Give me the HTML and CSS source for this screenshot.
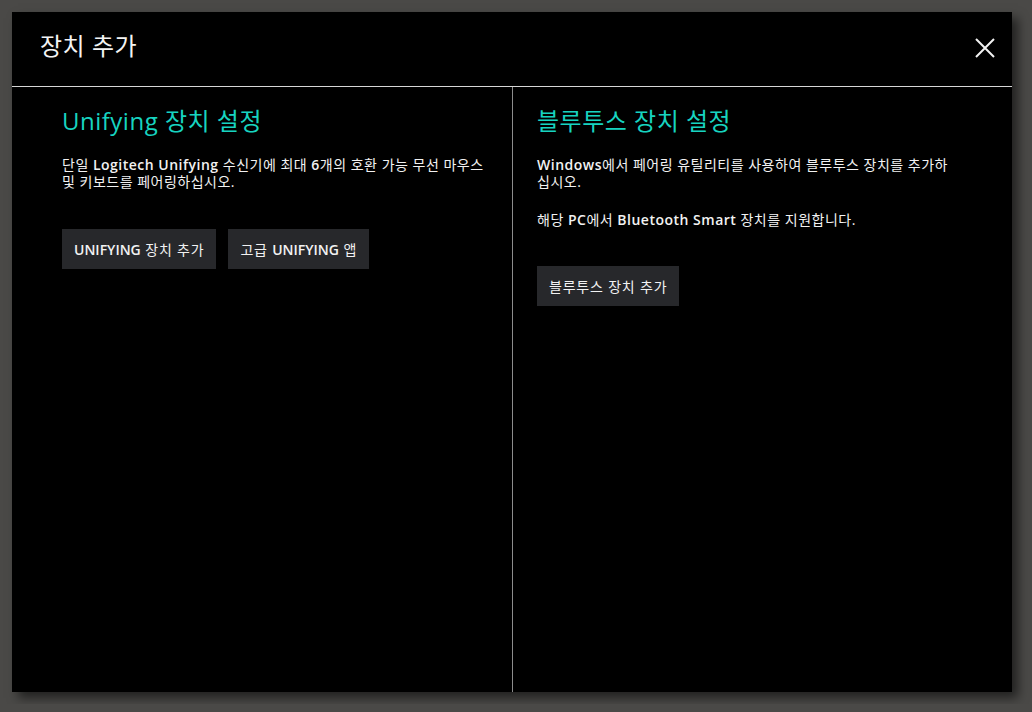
FILE: index.html
```html
<!DOCTYPE html>
<html lang="ko">
  <head>
    <title>장치 추가</title>
    <meta charset="utf-8">
    <link rel="stylesheet" href="styles.css">
  </head>
  <body>
    <div class="dialog">
      <div class="dialog-header">
        <h1>장치 추가</h1>
        <button class="close" aria-label="닫기">
          <svg width="20" height="20" viewBox="0 0 20 20">
            <path d="M1 1 L19 19 M19 1 L1 19" stroke="#f2f2f2" stroke-width="2" fill="none"/>
          </svg>
        </button>
      </div>

      <div class="dialog-body">
        <div class="column unifying">
          <h2>Unifying 장치 설정</h2>
          <p>단일 <span class="en">Logitech Unifying</span> 수신기에 최대 <span class="en">6</span>개의 호환 가능 무선 마우스 및 키보드를 페어링하십시오.</p>
          <div class="actions">
            <button class="btn"><span class="en">UNIFYING</span> 장치 추가</button>
            <button class="btn">고급 <span class="en">UNIFYING</span> 앱</button>
          </div>
        </div>

        <div class="column bluetooth">
          <h2>블루투스 장치 설정</h2>
          <p><span class="en">Windows</span>에서 페어링 유틸리티를 사용하여 블루투스 장치를 추가하십시오.</p>
          <p>해당 <span class="en">PC</span>에서 <span class="en">Bluetooth Smart</span> 장치를 지원합니다.</p>
          <div class="actions">
            <button class="btn">블루투스 장치 추가</button>
          </div>
        </div>
      </div>
    </div>
  </body>
</html>
```

FILE: styles.css
```css
body {
    margin: 0;
    padding: 12px;
    background-color: #4a4947;
    font-family: "Open Sans", "Noto Sans CJK KR", sans-serif;
    color: #f2f2f2;
}

.dialog {
    width: 1000px;
    height: 680px;
    background-color: #000;
    box-shadow: 6px 6px 10px rgba(0, 0, 0, 0.55);
    display: flex;
    flex-direction: column;
}

.dialog-header {
    height: 74px;
    border-bottom: 1px solid #d6d6d6;
    display: flex;
    align-items: center;
    justify-content: space-between;
    padding: 0 17px 0 28px;
    box-sizing: content-box;
}

.dialog-header h1 {
    margin: 0 0 10px 0;
    font-size: 24px;
    font-weight: 400;
    letter-spacing: 0.5px;
    color: #f4f4f4;
}

.close {
    background: none;
    border: none;
    padding: 0;
    width: 20px;
    height: 20px;
    margin-bottom: 2px;
    cursor: pointer;
}

.dialog-body {
    flex: 1;
    display: flex;
}

.column {
    padding-top: 19px;
    box-sizing: border-box;
}

.unifying {
    width: 501px;
    padding-left: 50px;
    border-right: 1px solid #8c8c8c;
}

.bluetooth {
    flex: 1;
    padding-left: 24px;
}

h2 {
    margin: 0 0 20px 0;
    font-size: 24px;
    font-weight: 400;
    line-height: 30px;
    letter-spacing: 0.5px;
    color: #17d4c0;
}

p {
    width: 422px;
    margin: 0 0 21px 0;
    font-size: 14px;
    line-height: 17px;
    letter-spacing: 0.5px;
}

.en {
    font-weight: 600;
}

.actions {
    display: flex;
    gap: 12px;
    margin-top: 39px;
}

.bluetooth .actions {
    margin-top: 38px;
}

.btn {
    height: 40px;
    padding: 0 12px;
    border: none;
    background-color: #27282b;
    color: #f2f2f2;
    font-family: inherit;
    font-size: 14px;
    letter-spacing: 0.8px;
    cursor: pointer;
}

.btn .en {
    letter-spacing: 0;
}
```
